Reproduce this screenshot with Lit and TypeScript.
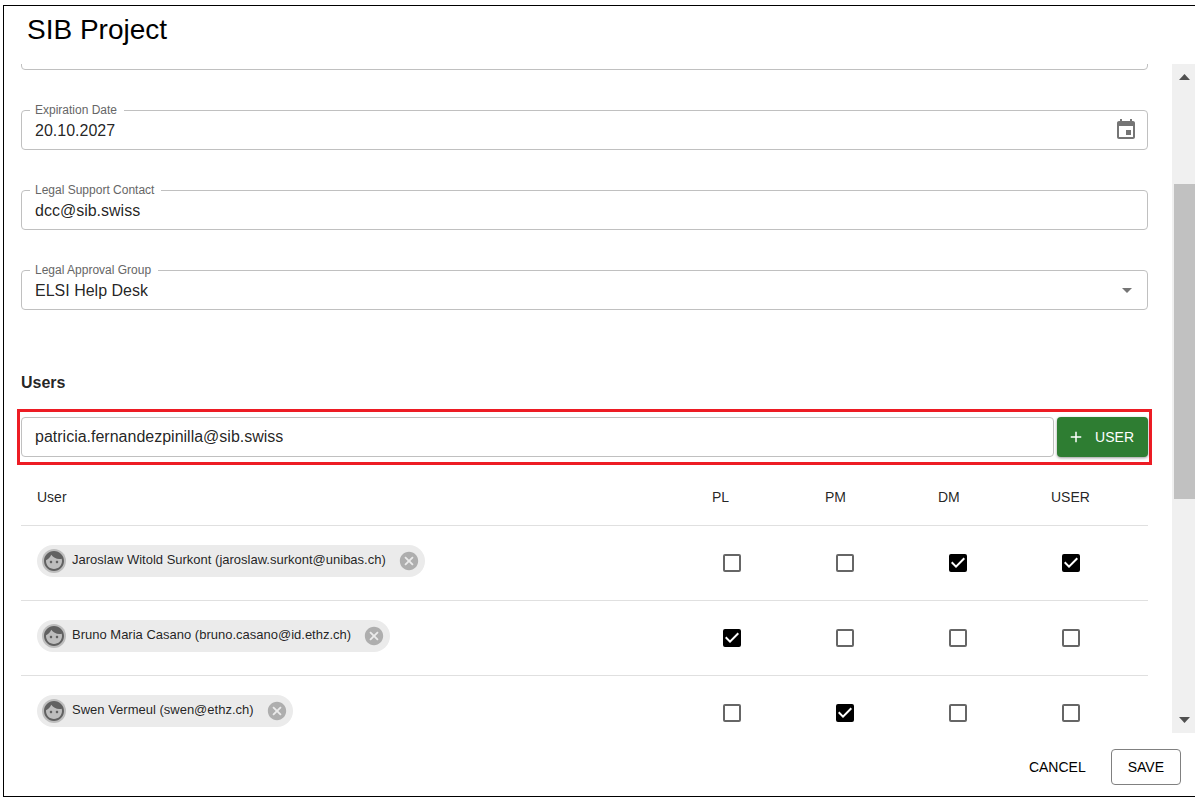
import { LitElement, html, css, svg } from "lit";
import { customElement, property, state } from "lit/decorators.js";

interface Member {
  name: string;
  roles: string[];
}

const ROLES = ["PL", "PM", "DM", "USER"];

const facePath = svg`<path d="M9 11.75c-.69 0-1.25.56-1.25 1.25s.56 1.25 1.25 1.25 1.25-.56 1.25-1.25-.56-1.25-1.25-1.25zm6 0c-.69 0-1.25.56-1.25 1.25s.56 1.25 1.25 1.25 1.25-.56 1.25-1.25-.56-1.25-1.25-1.25zM12 2C6.48 2 2 6.48 2 12s4.48 10 10 10 10-4.48 10-10S17.52 2 12 2zm0 18c-4.41 0-8-3.59-8-8 0-.29.02-.58.05-.86 2.36-1.05 4.23-2.98 5.21-5.37C11.07 8.33 14.05 10 17.42 10c.78 0 1.53-.09 2.25-.26.21.71.33 1.47.33 2.26 0 4.41-3.59 8-8 8z"/>`;
const cancelPath = svg`<path d="M12 2C6.47 2 2 6.47 2 12s4.47 10 10 10 10-4.47 10-10S17.53 2 12 2zm5 13.59L15.59 17 12 13.41 8.41 17 7 15.59 10.59 12 7 8.41 8.41 7 12 10.59 15.59 7 17 8.41 13.41 12 17 15.59z"/>`;
const calendarPath = svg`<path d="M17 12h-5v5h5v-5zM16 1v2H8V1H6v2H5c-1.11 0-1.99.9-1.99 2L3 19c0 1.1.89 2 2 2h14c1.1 0 2-.9 2-2V5c0-1.1-.9-2-2-2h-1V1h-2zm3 18H5V8h14v11z"/>`;

@customElement("member-chip")
export class MemberChip extends LitElement {
  @property() name = "";

  static styles = css`
    :host {
      display: inline-flex;
      align-items: center;
      height: 32px;
      border-radius: 16px;
      background: #ebebeb;
      vertical-align: middle;
      font-size: 13px;
      line-height: 20px;
      white-space: nowrap;
    }
    .avatar {
      width: 24px;
      height: 24px;
      margin-left: 5px;
      border-radius: 50%;
      background: #bdbdbd;
      fill: #616161;
    }
    .name {
      padding: 0 12px 2px 6px;
    }
    .remove {
      display: flex;
      margin: 0 5px 0 0;
      padding: 0;
      border: 0;
      background: none;
      cursor: pointer;
    }
    .cross {
      width: 22px;
      height: 22px;
      fill: #aeaeae;
    }
  `;

  render() {
    return html`
      <svg class="avatar" viewBox="0 0 24 24" aria-hidden="true">${facePath}</svg>
      <span class="name">${this.name}</span>
      <button class="remove" type="button" aria-label="Remove">
        <svg class="cross" viewBox="0 0 24 24">${cancelPath}</svg>
      </button>
    `;
  }
}

@customElement("app-root")
export class AppRoot extends LitElement {
  @state() private members: Member[] = [
    { name: "Jaroslaw Witold Surkont (jaroslaw.surkont@unibas.ch)", roles: ["DM", "USER"] },
    { name: "Bruno Maria Casano (bruno.casano@id.ethz.ch)", roles: ["PL"] },
    { name: "Swen Vermeul (swen@ethz.ch)", roles: ["PM"] },
  ];

  static styles = css`
    :host {
      display: block;
      height: 100vh;
      box-sizing: border-box;
      padding: 5px 0 4px 3px;
      background: #fff;
      color: rgba(0, 0, 0, 0.87);
      font: 16px/24px "Liberation Sans", Arial, sans-serif;
    }
    * {
      box-sizing: border-box;
    }
    .dialog {
      display: flex;
      flex-direction: column;
      height: 100%;
      border: 1px solid #000;
      border-right: 0;
    }
    .title {
      margin: 0;
      padding: 8px 23px 18px;
      font-size: 28px;
      line-height: 32px;
      font-weight: 400;
      color: #000;
    }
    .body {
      display: flex;
      flex: 1;
      min-height: 0;
    }
    .content {
      flex: 1;
      min-width: 0;
      overflow: hidden;
      padding: 0 24px 0 17px;
    }
    .fields {
      display: flex;
      flex-direction: column;
      gap: 40px;
      margin-top: -34px;
    }
    .field {
      position: relative;
      display: flex;
      align-items: center;
      height: 40px;
      border: 1px solid #c0c0c0;
      border-radius: 4px;
    }
    .label {
      position: absolute;
      top: -9px;
      left: 8px;
      padding: 0 7px 0 5px;
      background: #fff;
      color: #666;
      font-size: 12px;
      line-height: 16px;
    }
    .control {
      flex: 1;
      align-self: stretch;
      min-width: 0;
      width: 100%;
      margin: 0;
      padding: 0 13px;
      border: 0;
      border-radius: 4px;
      outline: 0;
      appearance: none;
      background: none;
      color: inherit;
      font: inherit;
    }
    .fields .control {
      padding-top: 2px;
    }
    .picker {
      display: flex;
      margin: 0 9px 0 0;
      padding: 0;
      border: 0;
      background: none;
    }
    .icon {
      width: 24px;
      height: 24px;
      fill: #757575;
    }
    .arrow {
      position: absolute;
      right: 8px;
      pointer-events: none;
    }
    .heading {
      margin: 61px 0 14px;
      font-size: 16px;
      line-height: 24px;
      font-weight: 700;
    }
    .adder {
      display: flex;
      gap: 3px;
      margin: 0 -4px 4px;
      padding: 5px 1px;
      border: 3px solid #ed1c24;
    }
    .grow {
      flex: 1;
    }
    .add {
      display: flex;
      align-items: center;
      gap: 10px;
      padding: 0 14px 0 10px;
      border: 0;
      border-radius: 4px;
      background: #2e7d32;
      box-shadow: 0 1px 3px rgba(0, 0, 0, 0.4);
      color: #fff;
      font: inherit;
      font-size: 14px;
      cursor: pointer;
    }
    .plus {
      width: 18px;
      height: 18px;
      fill: #fff;
    }
    .members {
      width: 100%;
      table-layout: fixed;
      border-collapse: separate;
      border-spacing: 0;
    }
    .head,
    .cell {
      padding: 0 16px;
      border-bottom: 1px solid #e0e0e0;
      text-align: left;
      font-size: 14px;
      font-weight: 400;
    }
    .head {
      height: 57px;
    }
    .role {
      width: 113px;
    }
    .cell {
      height: 75px;
    }
    .who {
      padding-bottom: 4px;
    }
    .tick {
      display: block;
      width: 18px;
      height: 18px;
      margin: 0 0 0 11px;
      appearance: none;
      border: 2px solid #666;
      border-radius: 2px;
      background: #fff;
    }
    .tick:checked {
      border-color: #000;
      background: #000
        url("data:image/svg+xml,%3Csvg xmlns='http://www.w3.org/2000/svg' viewBox='3 3 18 18'%3E%3Cpath fill='white' d='M10 17l-5-5 1.41-1.41L10 14.17l7.59-7.59L19 8l-9 9z'/%3E%3C/svg%3E")
        center / 18px 18px no-repeat border-box;
    }
    .scrollbar {
      display: flex;
      flex-direction: column;
      width: 23px;
      padding-left: 2px;
      background: #f0f0f0;
    }
    .step {
      width: 21px;
      height: 26px;
      fill: #505050;
    }
    .before {
      flex: 94;
    }
    .thumb {
      flex: 315;
      background: #c1c1c1;
    }
    .after {
      flex: 208;
    }
    .actions {
      display: flex;
      justify-content: flex-end;
      gap: 16px;
      padding: 16px 14px 11px;
    }
    .action {
      height: 36px;
      padding: 0 16px;
      border: 1px solid transparent;
      border-radius: 4px;
      background: none;
      color: #000;
      font: inherit;
      font-size: 14px;
      cursor: pointer;
    }
    .plain {
      padding: 0 8px;
    }
    .outlined {
      border-color: #808080;
    }
  `;

  private toggle(member: Member, role: string) {
    this.members = this.members.map((m) =>
      m !== member
        ? m
        : { ...m, roles: m.roles.includes(role) ? m.roles.filter((r) => r !== role) : [...m.roles, role] },
    );
  }

  private renderRow(member: Member) {
    return html`
      <tr>
        <td class="cell who"><member-chip .name=${member.name}></member-chip></td>
        ${ROLES.map(
          (role) => html`
            <td class="cell">
              <input
                class="tick"
                type="checkbox"
                aria-label=${`${role}: ${member.name}`}
                .checked=${member.roles.includes(role)}
                @change=${() => this.toggle(member, role)}
              />
            </td>
          `,
        )}
      </tr>
    `;
  }

  render() {
    return html`
      <main class="dialog">
        <h1 class="title">SIB Project</h1>
        <div class="body">
          <div class="content">
            <div class="fields">
              <div class="field"></div>
              <div class="field">
                <label class="label" for="expiration">Expiration Date</label>
                <input class="control" id="expiration" type="text" value="20.10.2027" />
                <button class="picker" type="button" aria-label="Choose date">
                  <svg class="icon" viewBox="0 0 24 24">${calendarPath}</svg>
                </button>
              </div>
              <div class="field">
                <label class="label" for="contact">Legal Support Contact</label>
                <input class="control" id="contact" type="text" value="dcc@sib.swiss" />
              </div>
              <div class="field">
                <label class="label" for="group">Legal Approval Group</label>
                <select class="control" id="group">
                  <option>ELSI Help Desk</option>
                </select>
                <svg class="icon arrow" viewBox="0 0 24 24" aria-hidden="true"><path d="M7 10l5 5 5-5z" /></svg>
              </div>
            </div>

            <h2 class="heading">Users</h2>
            <div class="adder">
              <div class="field grow">
                <input class="control" type="text" aria-label="User email" value="patricia.fernandezpinilla@sib.swiss" />
              </div>
              <button class="add" type="button">
                <svg class="plus" viewBox="0 0 24 24" aria-hidden="true">
                  <path d="M19 13h-6v6h-2v-6H5v-2h6V5h2v6h6v2z" />
                </svg>
                USER
              </button>
            </div>

            <table class="members">
              <thead>
                <tr>
                  <th class="head" scope="col">User</th>
                  ${ROLES.map((role) => html`<th class="head role" scope="col">${role}</th>`)}
                </tr>
              </thead>
              <tbody>
                ${this.members.map((m) => this.renderRow(m))}
              </tbody>
            </table>
          </div>
          <div class="scrollbar" aria-hidden="true">
            <svg class="step" viewBox="0 0 21 26"><path d="M5 16h11l-5.500-6z" /></svg>
            <div class="before"></div>
            <div class="thumb"></div>
            <div class="after"></div>
            <svg class="step" viewBox="0 0 21 26"><path d="M5 10h11l-5.500 6z" /></svg>
          </div>
        </div>
        <footer class="actions">
          <button class="action plain" type="button">CANCEL</button>
          <button class="action outlined" type="button">SAVE</button>
        </footer>
      </main>
    `;
  }
}
